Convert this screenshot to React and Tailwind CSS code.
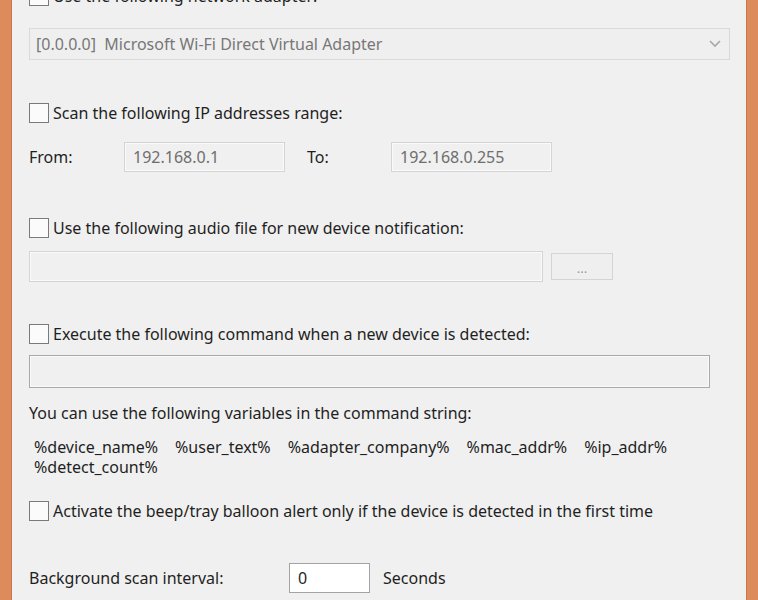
import React from 'react';

const font = { fontFamily: '"Noto Sans", "Open Sans", sans-serif' };

const Check = ({ label }) => (
  <label className="flex items-center h-[20px] text-[#1f1f1f]">
    <span className="w-[20px] h-[20px] border border-[#7a7a7a] bg-[#fbfbfb] shrink-0" />
    <span className="ml-[4px] whitespace-nowrap">{label}</span>
  </label>
);

const DisabledBox = ({ className, value }) => (
  <div className={`border border-[#d4d4d4] bg-[#f0f0f0] shadow-[inset_0_0_0_1px_#fafafa] flex items-center text-[#6e6e6e] ${className}`}>
    {value}
  </div>
);

const variables = ['%device_name%', '%user_text%', '%adapter_company%', '%mac_addr%', '%ip_addr%'];

const App = () => {
  return (
    <div className="w-[758px] h-[600px] flex overflow-hidden text-[16px]" style={font}>
      <div className="w-[12px] bg-[#de8b5b] border-r border-[#c9774a]" />
      <div className="flex-1 bg-[#f0f0f0] pl-[17px] overflow-hidden">
        <div className="mt-[-14px]">
          <Check label="Use the following network adapter:" />

          {/* adapter combo */}
          <div className="mt-[22px] w-[701px] h-[32px] border border-[#d9d9d9] bg-[#efefef] flex items-center justify-between pl-[6px] pr-[8px] text-[#777]">
            <span>[0.0.0.0]&nbsp; Microsoft Wi-Fi Direct Virtual Adapter</span>
            <svg width="12" height="8" viewBox="0 0 12 8">
              <path d="M1 1l5 5 5-5" fill="none" stroke="#a8a8a8" strokeWidth="1.6" />
            </svg>
          </div>

          <div className="mt-[43px]">
            <Check label="Scan the following IP addresses range:" />
          </div>

          <div className="mt-[19px] flex items-center h-[30px] text-[#1f1f1f]">
            <span className="w-[95px]">From:</span>
            <DisabledBox className="w-[161px] h-[30px] pl-[8px]" value="192.168.0.1" />
            <span className="ml-[22px] w-[84px]">To:</span>
            <DisabledBox className="w-[161px] h-[30px] pl-[8px]" value="192.168.0.255" />
          </div>

          <div className="mt-[46px]">
            <Check label="Use the following audio file for new device notification:" />
          </div>

          <div className="mt-[13px] flex items-center">
            <DisabledBox className="w-[514px] h-[31px]" value="" />
            <div className="ml-[8px] w-[62px] h-[27px] border border-[#d4d4d4] bg-[#efefef] flex items-center justify-center text-[#9a9a9a] text-[13px] leading-none pt-[4px]">
              ...
            </div>
          </div>

          <div className="mt-[42px]">
            <Check label="Execute the following command when a new device is detected:" />
          </div>

          <div className="mt-[11px] w-[681px] h-[33px] border border-[#a9a9a9] bg-[#f0f0f0] shadow-[inset_0_0_0_1px_#fafafa]" />

          <div className="mt-[15px] text-[#1f1f1f] leading-[20px]">
            You can use the following variables in the command string:
          </div>

          <div className="mt-[14px] pl-[5px] text-[#1f1f1f] leading-[20px]">
            <div className="flex gap-[17px]">
              {variables.map(v => (
                <span key={v}>{v}</span>
              ))}
            </div>
            <div>%detect_count%</div>
          </div>

          <div className="mt-[24px]">
            <Check label="Activate the beep/tray balloon alert only if the device is detected in the first time" />
          </div>

          <div className="mt-[42px] flex items-center h-[30px] text-[#1f1f1f]">
            <span className="w-[260px]">Background scan interval:</span>
            <div className="w-[81px] h-[30px] border border-[#a3a3a3] bg-white flex items-center pl-[8px]">0</div>
            <span className="ml-[13px]">Seconds</span>
          </div>
        </div>
      </div>
      <div className="w-[12px] bg-[#de8b5b] border-l border-[#c9774a]" />
    </div>
  );
};

export default App;
